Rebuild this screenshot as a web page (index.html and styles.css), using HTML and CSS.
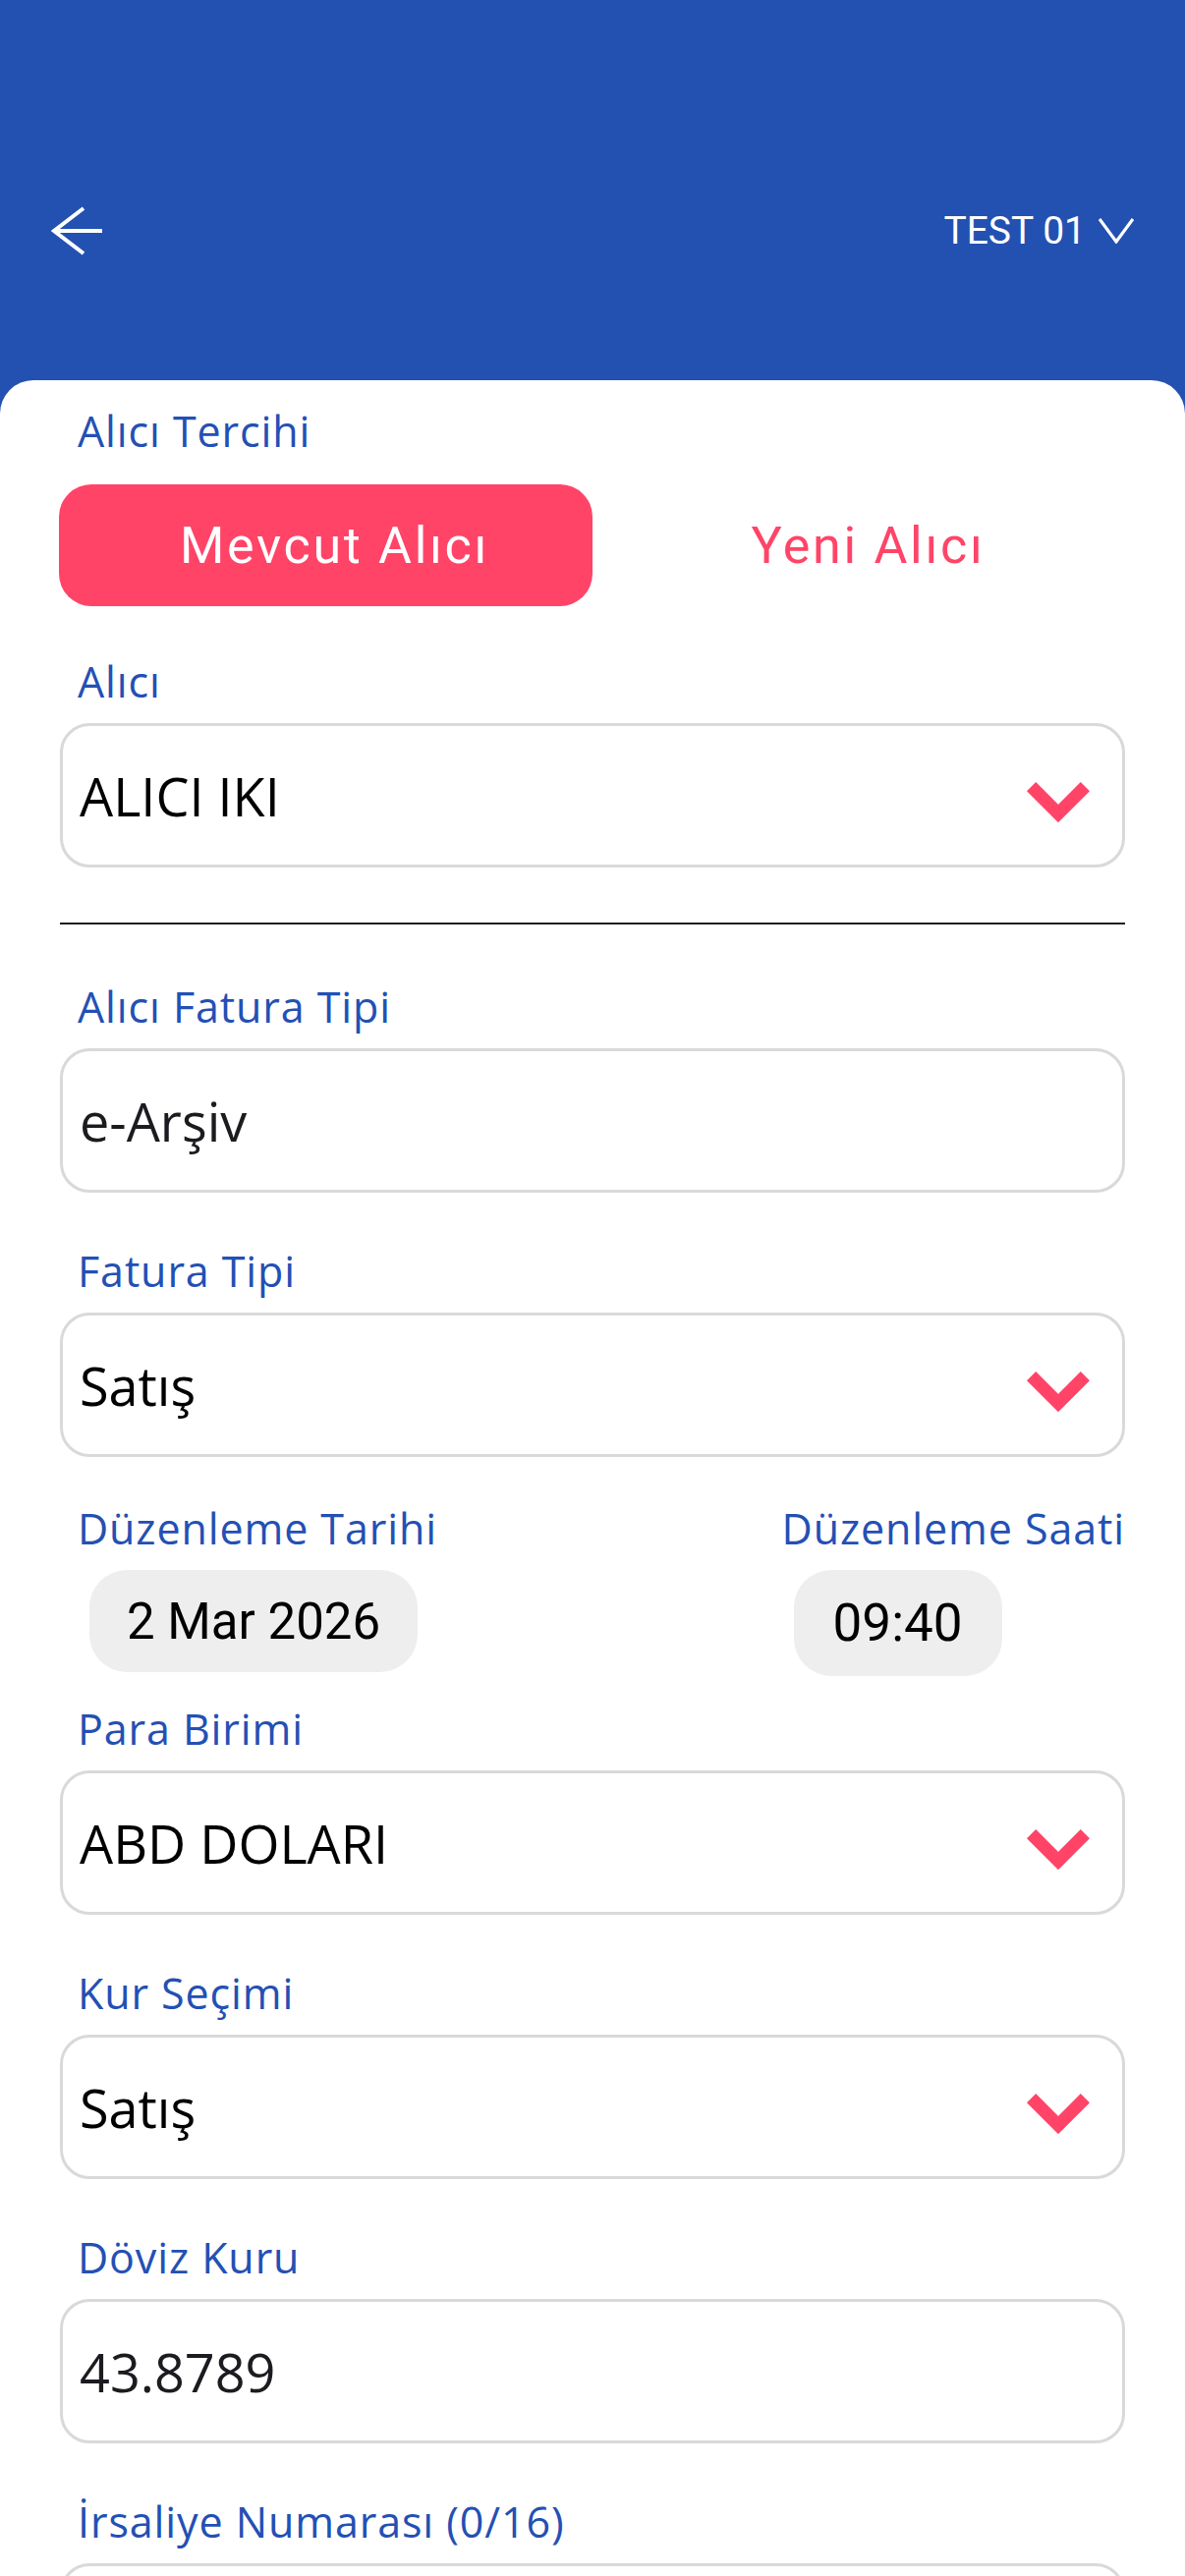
FILE: index.html
```html
<!DOCTYPE html>
<html lang="tr">

<head>
    <meta charset="UTF-8">
    <meta name="viewport" content="width=device-width, initial-scale=1.0">
    <title>Fatura Bilgileri</title>
    <link rel="stylesheet" href="styles.css">
</head>

<body>
    <header class="topbar">
        <button class="back-btn" aria-label="Geri">
            <svg width="54" height="52" viewBox="0 0 54 52">
                <path d="M52 26H3M33 3L3 26L33 49" fill="none" stroke="#fff" stroke-width="4" />
            </svg>
        </button>
        <div class="company">
            <span>TEST 01</span>
            <svg width="36" height="26" viewBox="0 0 36 26">
                <polyline points="1,1 18,24 35,1" fill="none" stroke="#fff" stroke-width="3.2" />
            </svg>
        </div>
    </header>

    <main class="sheet">
        <!-- Alıcı Tercihi -->
        <div class="label">Alıcı Tercihi</div>
        <div class="segment">
            <button class="segment-btn active">Mevcut Alıcı</button>
            <button class="segment-btn">Yeni Alıcı</button>
        </div>

        <!-- Alıcı -->
        <div class="field field-top">
            <div class="label">Alıcı</div>
            <div class="box">
                <span>ALICI IKI</span>
                <svg class="chev" width="64" height="41" viewBox="0 0 64 41">
                    <polyline points="4.6,4.6 32,32 59.4,4.6" fill="none" stroke="#ff4468" stroke-width="13" />
                </svg>
            </div>
        </div>

        <hr class="divider">

        <!-- Alıcı Fatura Tipi -->
        <div class="field field-after-line">
            <div class="label">Alıcı Fatura Tipi</div>
            <div class="box input">
                <span>e-Arşiv</span>
            </div>
        </div>

        <!-- Fatura Tipi -->
        <div class="field">
            <div class="label">Fatura Tipi</div>
            <div class="box">
                <span>Satış</span>
                <svg class="chev" width="64" height="41" viewBox="0 0 64 41">
                    <polyline points="4.6,4.6 32,32 59.4,4.6" fill="none" stroke="#ff4468" stroke-width="13" />
                </svg>
            </div>
        </div>

        <!-- Tarih / Saat -->
        <div class="date-row">
            <div class="date-col">
                <div class="label">Düzenleme Tarihi</div>
                <div class="chip">2 Mar 2026</div>
            </div>
            <div class="date-col">
                <div class="label">Düzenleme Saati</div>
                <div class="chip chip-time">09:40</div>
            </div>
        </div>

        <!-- Para Birimi -->
        <div class="field field-after-date">
            <div class="label">Para Birimi</div>
            <div class="box">
                <span>ABD DOLARI</span>
                <svg class="chev" width="64" height="41" viewBox="0 0 64 41">
                    <polyline points="4.6,4.6 32,32 59.4,4.6" fill="none" stroke="#ff4468" stroke-width="13" />
                </svg>
            </div>
        </div>

        <!-- Kur Seçimi -->
        <div class="field">
            <div class="label">Kur Seçimi</div>
            <div class="box">
                <span>Satış</span>
                <svg class="chev" width="64" height="41" viewBox="0 0 64 41">
                    <polyline points="4.6,4.6 32,32 59.4,4.6" fill="none" stroke="#ff4468" stroke-width="13" />
                </svg>
            </div>
        </div>

        <!-- Döviz Kuru -->
        <div class="field">
            <div class="label">Döviz Kuru</div>
            <div class="box input">
                <span>43.8789</span>
            </div>
        </div>

        <!-- İrsaliye Numarası -->
        <div class="field">
            <div class="label">İrsaliye Numarası (0/16)</div>
            <div class="box input">
                <span></span>
            </div>
        </div>
    </main>
</body>

</html>
```

FILE: styles.css
```css
* {
    box-sizing: border-box;
}

body {
    margin: 0;
    background-color: #2351b1;
    font-family: "Open Sans", sans-serif;
}

/* top bar */
.topbar {
    height: 387px;
    display: flex;
    justify-content: space-between;
    align-items: flex-start;
    padding: 209px 52px 0 52px;
}

.back-btn {
    background: none;
    border: none;
    padding: 0;
    width: 54px;
    height: 52px;
}

.back-btn svg {
    display: block;
}

.company {
    display: flex;
    align-items: center;
    gap: 13px;
    height: 52px;
    color: #fff;
    font-family: Roboto, sans-serif;
    font-size: 39px;
}

.company svg {
    display: block;
}

/* white sheet */
.sheet {
    background: #fff;
    border-radius: 34px 34px 0 0;
    min-height: 2300px;
    padding: 27px 61px 60px;
}

.label {
    height: 50px;
    padding-left: 18px;
    font-size: 43px;
    line-height: 50px;
    letter-spacing: 0.9px;
    color: #2350b4;
    white-space: nowrap;
}

/* Mevcut / Yeni toggle */
.segment {
    display: grid;
    grid-template-columns: 1fr 1fr;
    height: 124px;
    margin: 29px -1px 0;
}

.segment-btn {
    border: none;
    background: none;
    padding: 0 0 0 18px;
    border-radius: 33px;
    font-family: Roboto, sans-serif;
    font-size: 52px;
    letter-spacing: 2.7px;
    color: #ff4468;
}

.segment-btn.active {
    background-color: #ff4468;
    color: #fff;
}

/* form fields */
.field {
    margin-top: 55px;
}

.field-top {
    margin-top: 52px;
}

.field-after-line {
    margin-top: 59px;
}

.field-after-date {
    margin-top: 29px;
}

.box {
    display: flex;
    align-items: center;
    justify-content: space-between;
    height: 147px;
    margin-top: 17px;
    padding: 0 33px 0 17px;
    border: 3px solid #d9d9d9;
    border-radius: 30px;
    font-size: 54px;
    color: #000;
}

.box.input {
    color: #1d1b20;
}

.chev {
    display: block;
    margin-top: 13px;
}

.divider {
    height: 2px;
    margin: 56px 0 0;
    border: none;
    background-color: #1e1e1e;
}

/* date and time */
.date-row {
    display: flex;
    justify-content: space-between;
    align-items: flex-start;
    margin-top: 48px;
}

.date-col {
    display: flex;
    flex-direction: column;
    align-items: flex-start;
}

.chip {
    display: flex;
    align-items: center;
    height: 104px;
    margin: 17px 0 0 30px;
    padding: 0 38px;
    border-radius: 38px;
    background-color: #eeeeee;
    font-family: Roboto, sans-serif;
    font-size: 51px;
    color: #000;
}

.chip-time {
    height: 108px;
    padding: 0 40px;
    font-size: 53px;
}
```
